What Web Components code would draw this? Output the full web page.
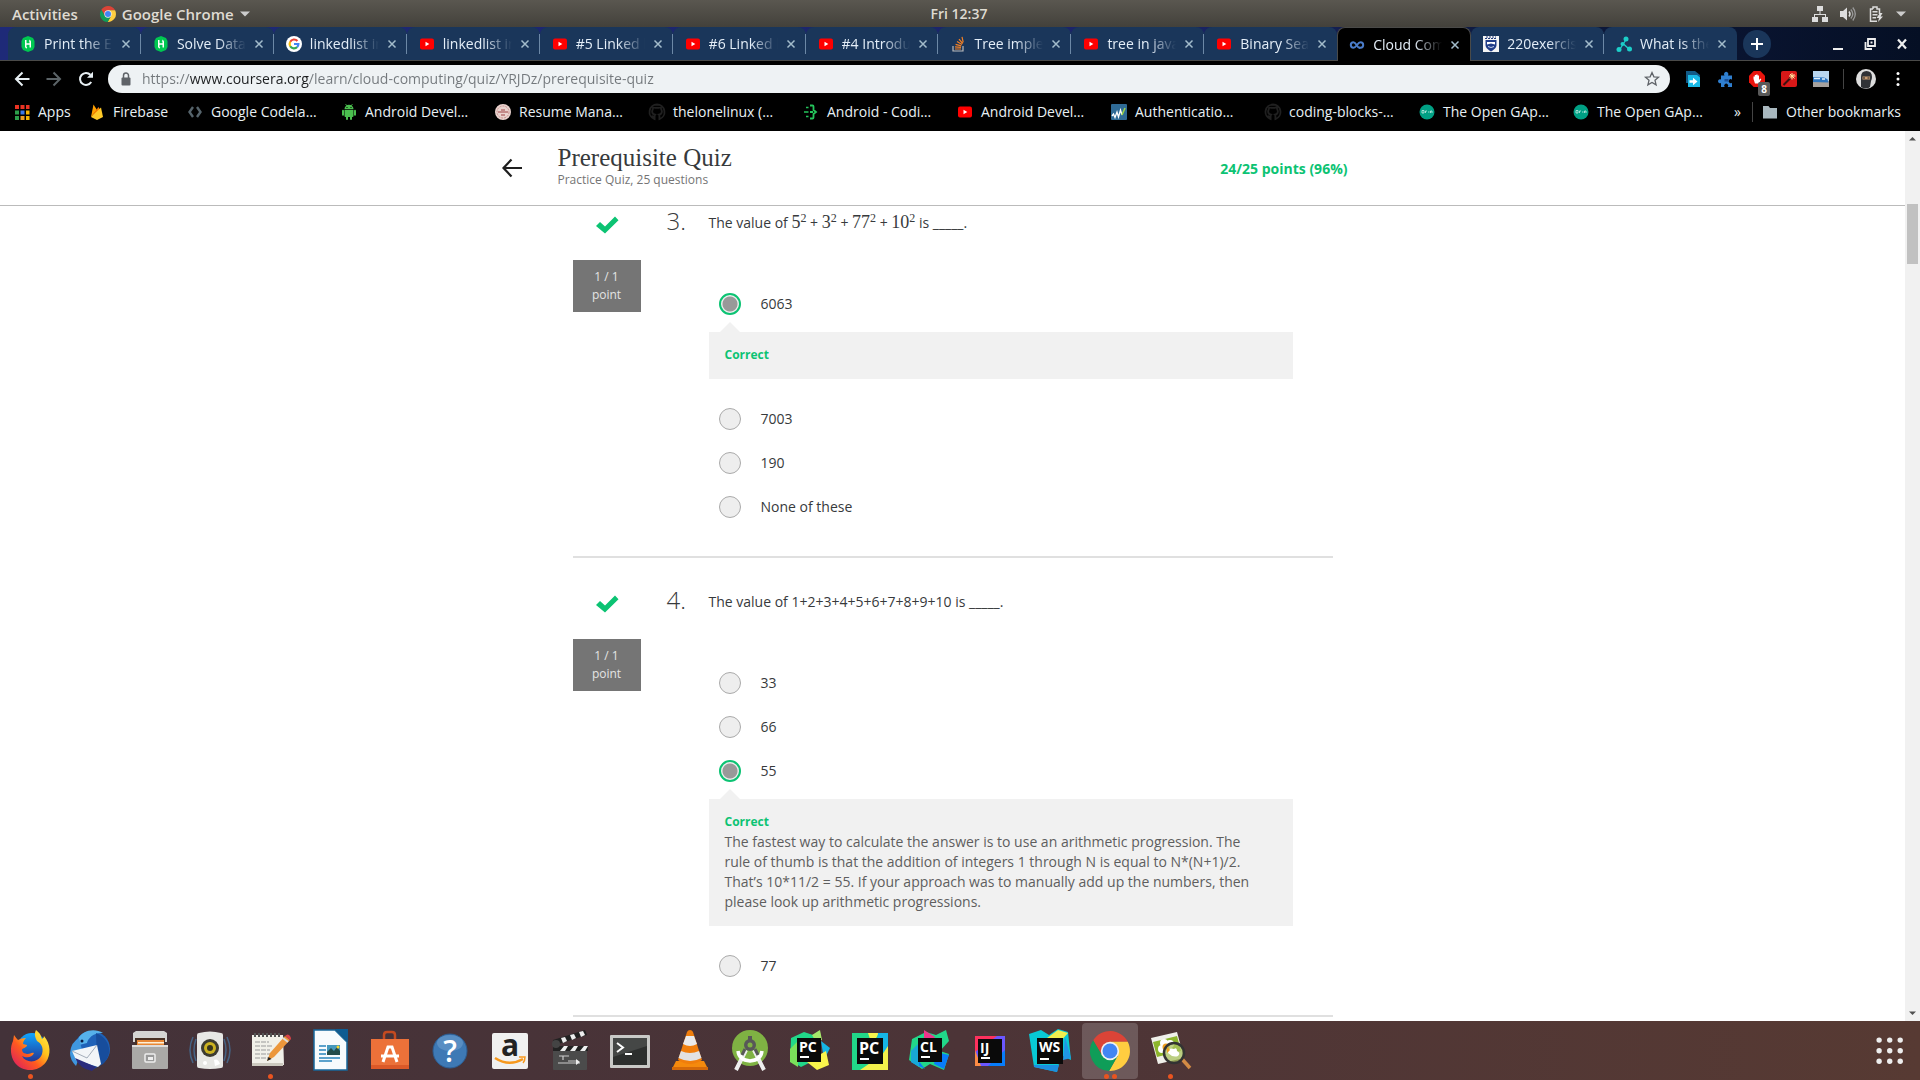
<!DOCTYPE html>
<html lang="en">
<head>
<meta charset="utf-8">
<title>Prerequisite Quiz</title>
<style>
html, body { height: 100%; margin: 0; }
body { display: flex; flex-direction: column; overflow: hidden; background: #fff; font: 14px/20px "Open Sans", "Noto Sans", sans-serif; color: #373a3c; }
</style>
</head>
<body>
<system-bar></system-bar>
<tab-strip>
  <browser-tab icon="hacker">Print the El</browser-tab>
  <browser-tab icon="hacker">Solve Data</browser-tab>
  <browser-tab icon="google">linkedlist in</browser-tab>
  <browser-tab icon="youtube">linkedlist in</browser-tab>
  <browser-tab icon="youtube">#5 Linked l</browser-tab>
  <browser-tab icon="youtube">#6 Linked l</browser-tab>
  <browser-tab icon="youtube">#4 Introdu</browser-tab>
  <browser-tab icon="stack">Tree imple</browser-tab>
  <browser-tab icon="youtube">tree in java</browser-tab>
  <browser-tab icon="youtube" last>Binary Sea</browser-tab>
  <browser-tab icon="coursera" active>Cloud Com</browser-tab>
  <browser-tab icon="crest">220exercis</browser-tab>
  <browser-tab icon="nodes" last>What is the</browser-tab>
</tab-strip>
<address-bar></address-bar>
<bookmark-bar>
  <bookmark-link icon="apps" style="--label:35px">Apps</bookmark-link>
  <bookmark-link icon="firebase" style="--label:58px">Firebase</bookmark-link>
  <bookmark-link icon="codelabs">Google Codela…</bookmark-link>
  <bookmark-link icon="android">Android Devel…</bookmark-link>
  <bookmark-link icon="resume">Resume Mana…</bookmark-link>
  <bookmark-link icon="github">thelonelinux (…</bookmark-link>
  <bookmark-link icon="coding">Android - Codi…</bookmark-link>
  <bookmark-link icon="youtube">Android Devel…</bookmark-link>
  <bookmark-link icon="auth">Authenticatio…</bookmark-link>
  <bookmark-link icon="github">coding-blocks-…</bookmark-link>
  <bookmark-link icon="gapps">The Open GAp…</bookmark-link>
  <bookmark-link icon="gapps">The Open GAp…</bookmark-link>
  <bookmark-link slot="other" icon="folder" style="--label:120px">Other bookmarks</bookmark-link>
</bookmark-bar>
<page-view>
  <quiz-header>
    <span slot="title">Prerequisite Quiz</span>
    <span slot="subtitle">Practice Quiz, 25 questions</span>
    <span slot="score">24/25 points (96%)</span>
  </quiz-header>
  <quiz-question number="3." first>
    <span slot="prompt">The value of <math-power base="5"></math-power> + <math-power base="3"></math-power> + <math-power base="77"></math-power> + <math-power base="10"></math-power> is _____.</span>
    <quiz-option checked>6063</quiz-option>
    <quiz-feedback></quiz-feedback>
    <quiz-option>7003</quiz-option>
    <quiz-option>190</quiz-option>
    <quiz-option>None of these</quiz-option>
  </quiz-question>
  <quiz-question number="4.">
    <span slot="prompt">The value of 1+2+3+4+5+6+7+8+9+10 is _____.</span>
    <quiz-option>33</quiz-option>
    <quiz-option>66</quiz-option>
    <quiz-option checked>55</quiz-option>
    <quiz-feedback>The fastest way to calculate the answer is to use an arithmetic progression. The rule of thumb is that the addition of integers 1 through N is equal to N*(N+1)/2. That’s 10*11/2 = 55. If your approach was to manually add up the numbers, then please look up arithmetic progressions.</quiz-feedback>
    <quiz-option>77</quiz-option>
  </quiz-question>
</page-view>
<app-dock>
  <dock-item icon="firefox" dots="1">Firefox</dock-item>
  <dock-item icon="thunderbird">Thunderbird</dock-item>
  <dock-item icon="files">Files</dock-item>
  <dock-item icon="rhythmbox">Rhythmbox</dock-item>
  <dock-item icon="notes" dots="1">Text Editor</dock-item>
  <dock-item icon="writer">Writer</dock-item>
  <dock-item icon="software">Ubuntu Software</dock-item>
  <dock-item icon="help">Help</dock-item>
  <dock-item icon="amazon">Amazon</dock-item>
  <dock-item icon="clapper">Video Editor</dock-item>
  <dock-item icon="terminal">Terminal</dock-item>
  <dock-item icon="vlc">VLC</dock-item>
  <dock-item icon="studio">Android Studio</dock-item>
  <dock-item icon="pycharm">PyCharm</dock-item>
  <dock-item icon="pycharmce">PyCharm CE</dock-item>
  <dock-item icon="clion">CLion</dock-item>
  <dock-item icon="idea">IntelliJ IDEA</dock-item>
  <dock-item icon="webstorm">WebStorm</dock-item>
  <dock-item icon="chrome" dots="2" active>Chrome</dock-item>
  <dock-item icon="viewer" dots="1">Image Viewer</dock-item>
</app-dock>

<script>
const jb = (shapes, letters, x, y, s, fs) => `${shapes}<rect x="${x}" y="${y}" width="${s}" height="${s}" fill="#0a0a0a"/><rect x="${x + 3}" y="${y + s - 6}" width="9" height="2" fill="#fff"/><text x="${x + 2}" y="${y + fs}" font-family="Open Sans, sans-serif" font-weight="700" font-size="${fs}" fill="#fff">${letters}</text>`;

/* name: [viewBox size, markup] */
const ICONS = {
  chrome: [48, `<path fill="#db4437" d="M3.8 11A24 24 0 0 1 45.3 13H24L14.5 29.5Z"/><path fill="#ffcd40" d="M45.3 13A24 24 0 0 1 22.9 48L33.5 29.5 24 13Z"/><path fill="#0f9d58" d="M22.9 48A24 24 0 0 1 3.8 11L14.5 29.5H33.5Z"/><circle cx="24" cy="24" r="11" fill="#f1f1f1"/><circle cx="24" cy="24" r="9" fill="#4285f4"/>`],
  network: [16, `<g fill="#ddd"><path d="M5 0h6v5H5zM0 11h6v5H0zM10 11h6v5h-6z"/><path d="M7.5 5h1v3H14v3h-1V9H3v2H2V8h5.500z"/></g>`],
  volume: [16, `<path fill="#ddd" d="M0 5h3l4-3.500v13L3 11H0z"/><path d="M9 5.500q2 2.500 0 5" stroke="#ddd" stroke-width="1.500" fill="none"/><path d="M10.800 3.500q4 4.500 0 9M12.800 1.500q5 6.500 0 13" stroke="#999" stroke-width="1.300" fill="none"/>`],
  battery: [16, `<path d="M5 3V1h4v2h2.500v5M9 15.200H2.500V3H5" fill="none" stroke="#ddd" stroke-width="1.500"/><path d="M4.500 5h5v1.500h-5zM4.500 8h5v1.500h-5zM4.500 11H8v1.500H4.500z" fill="#ddd"/><path d="M12 7l-3.500 5H11l-1 4 5-5.500h-2.500L14.500 7z" fill="#ddd"/>`],
  caret: [10, `<path d="M0 2.500h10l-5 5z" fill="#ccc"/>`],
  hacker: [16, `<path fill="#00c851" d="M8 0l5 2 1.500 3v6L13 14l-5 2-5-2-1.500-3V5L3 2z"/><path fill="#fff" d="M5 4h1.500v3.200h3V5.500H8.800l1-2 1.200 2v6H9.500V8.700h-3v2.200h.8l-1 1.800L5 11z"/>`],
  google: [16, `<circle cx="8" cy="8" r="8" fill="#fff"/><g fill="none" stroke-width="2.200"><path stroke="#ea4335" d="M4.200 5.800A4.400 4.400 0 0 1 11.400 5"/><path stroke="#fbbc05" d="M4.200 10.200a4.400 4.400 0 0 1 0-4.400"/><path stroke="#34a853" d="M11.200 11a4.400 4.400 0 0 1-7-.8"/><path stroke="#4285f4" d="M8 8h4.400a4.400 4.400 0 0 1-1.200 3"/></g>`],
  youtube: [16, `<rect x="1" y="2.500" width="14" height="11" rx="2" fill="#f00"/><path fill="#fff" d="M6.500 5.800v4.400L10.300 8z"/>`],
  stack: [16, `<path d="M3 10v5h10v-5" fill="none" stroke="#bbb" stroke-width="1.200"/><path d="M5 13h6M5 10.800l6 .5M5.600 8.300l5.700 1.500M7 5.600l5 3M9 3.200l3.700 4.300M12 .8l1.200 5.500" stroke="#f48024" stroke-width="1.200"/>`],
  coursera: [16, `<path d="M11 10.800C8.500 12 7.500 5.300 4.500 5.300a2.700 2.700 0 0 0 0 5.400C7.500 10.700 8.500 5.300 11.500 5.300a2.700 2.700 0 0 1 0 5.400 2.500 2.500 0 0 1-2-.9" fill="none" stroke="#4a7cc9" stroke-width="2"/>`],
  crest: [16, `<rect width="16" height="16" fill="#f4f4f4"/><path d="M2 2.500h12M3 1h10" stroke="#223b7a" stroke-width="1" stroke-dasharray="2 1"/><path d="M2.500 4h11v5c0 3-3 5-5.500 6.500C5.500 14 2.500 12 2.500 9z" fill="#1f3c88"/><path d="M4 6h8v2.500l-4-1-4 1z" fill="#fff"/><path d="M5 10.500q3 2 6 0" stroke="#c5d0ec" fill="none"/>`],
  nodes: [16, `<path d="M10.500 3L4 13M7.500 8l5.500 5" stroke="#1ccfc9" stroke-width="1.300"/><g fill="#1ccfc9"><circle cx="10" cy="3" r="2.500"/><circle cx="6.500" cy="8" r="2"/><circle cx="3" cy="13.500" r="2.500"/><circle cx="13.500" cy="13" r="2.500"/></g>`],
  close: [10, `<path d="M1.500 1.500l7 7M8.500 1.500l-7 7" stroke="currentColor" stroke-width="1.500"/>`],
  plus: [12, `<path d="M6 0v12M0 6h12" stroke="#fff" stroke-width="2"/>`],
  min: [12, `<path d="M1 10h10v2H1z" fill="#eee"/>`],
  restore: [12, `<path d="M4 1h7v7H4zM1.500 4v7H8" fill="none" stroke="#eee" stroke-width="1.800"/><path d="M6.500 3.500h2v2h-2z" fill="#eee"/>`],
  winclose: [12, `<path d="M2 1.500l8 9M10 1.500l-8 9" stroke="#eee" stroke-width="2.200"/>`],
  back: [16, `<path d="M8.500 1.500L2 8l6.500 6.500M2 8h13.500" fill="none" stroke="currentColor" stroke-width="2"/>`],
  forward: [16, `<path d="M7.500 1.500L14 8l-6.500 6.500M14 8H.5" fill="none" stroke="currentColor" stroke-width="2"/>`],
  reload: [16, `<path d="M13.200 11A6 6 0 1 1 12.400 3.800" fill="none" stroke="#e8f0f4" stroke-width="2"/><path d="M15 .8v6H9z" fill="#e8f0f4"/>`],
  lock: [16, `<rect x="3.500" y="6.500" width="9" height="8" rx="1" fill="#5f6368"/><path d="M5.500 7V4.500a2.500 2.500 0 0 1 5 0V7" fill="none" stroke="#5f6368" stroke-width="1.500"/>`],
  star: [16, `<path d="M8 1.500l1.900 4.300 4.600.4-3.500 3.100 1.100 4.600L8 11.400l-4.100 2.500L5 9.300 1.500 6.200l4.600-.4z" fill="none" stroke="#5f6368" stroke-width="1.300"/>`],
  extpage: [16, `<path d="M1 0h9l5 4v8H1z" fill="#135a86"/><path d="M3 4h9l3 2.500V16H3z" fill="#19b9e6"/><path d="M4.500 9.200H8V6.800l4.500 3.700L8 14.200v-2.400H4.500z" fill="#fff"/>`],
  puzzle: [16, `<path d="M7.500 4.500a2.200 2.200 0 1 1 3.400 0H15v4.200a2 2 0 1 0 0 3V16h-4.300a2 2 0 1 0-3 0H4v-4a2 2 0 1 1 0-3.500v-4z" fill="#2f7fd0"/><path d="M7.500 8h4v2.500h-4z" fill="#1b4f97"/>`],
  hand: [16, `<path d="M4.700 0h6.600L16 4.700v6.600L11.300 16H4.700L0 11.300V4.700z" fill="#e8140c"/><path d="M4.500 8V5.500h1.300V8V4h1.400v4V3.500h1.400V8V4.500H10V9l1.300-1.500 1 .8L10 12.500H6z" fill="#fff"/>`],
  wand: [16, `<rect width="16" height="16" rx="2" fill="#d81818"/><path d="M2.500 14L9.500 7" stroke="#3a1010" stroke-width="2"/><path d="M11 2v6.500M8 5h6.500M9 3l4.500 4.500M13.500 3L9 7.500" stroke="#ffe9a0" stroke-width="1"/>`],
  train: [16, `<rect width="16" height="16" fill="#b9d6ee"/><path d="M0 10h16v6H0z" fill="#a6a19d"/><path d="M0 6l11 .5q4 1 4.500 5L0 11z" fill="#2e76bf"/><path d="M1 7.500h6M9 8h3" stroke="#e5f2fc" stroke-width="1.500"/>`],
  avatar: [20, `<circle cx="10" cy="10" r="10" fill="#ddd"/><path d="M5 18V8q0-6 5.500-6T16 8q0 2-1 4l-1 6q-4 3-9 0z" fill="#303236"/><path d="M6.500 7.500H14v3H6.500z" fill="#c89c72"/><path d="M7 9h2M11.500 9h2" stroke="#222" stroke-width="1.200"/>`],
  dots: [16, `<g fill="#fff"><circle cx="8" cy="2.500" r="1.500"/><circle cx="8" cy="8" r="1.500"/><circle cx="8" cy="13.500" r="1.500"/></g>`],
  apps: [16, `<path d="M1 1h4v4H1zM6.500 1h4v4h-4zM12 1h3.500v4H12z" fill="#ea3323"/><path d="M1 6.500h4v4H1z" fill="#2c9f4b"/><path d="M6.500 6.500h4v4h-4z" fill="#3b78e7"/><path d="M12 6.500h3.500v4H12z" fill="#f5b400"/><path d="M1 12h4v4H1z" fill="#2c9f4b"/><path d="M6.500 12h4v4h-4z" fill="#ea9c23"/><path d="M12 12h3.500v4H12z" fill="#f5b400"/>`],
  firebase: [16, `<path d="M2 13L4.500.5 8 6z" fill="#ffa000"/><path d="M2 13L9.500 3l2 3.500z" fill="#f57c00"/><path d="M2 13L12 3.500 14 13l-6 3z" fill="#ffca28"/>`],
  codelabs: [16, `<path d="M6 3L2.500 8 6 13M10 3l3.500 5-3.500 5" fill="none" stroke="#56646c" stroke-width="2.400"/>`],
  android: [16, `<g fill="#4bbf4f"><path d="M3.500 5a4.500 4.300 0 0 1 9 0zM3.500 5.700h9V12q0 1-1 1h-7q-1 0-1-1z"/><rect x="1" y="5.700" width="2" height="6" rx="1"/><rect x="13" y="5.700" width="2" height="6" rx="1"/><rect x="5" y="11" width="2" height="5" rx="1"/><rect x="9" y="11" width="2" height="5" rx="1"/></g><path d="M4.500 0L6 2M11.500 0L10 2" stroke="#4bbf4f" stroke-width=".8"/><path d="M5.500 3h1v1h-1zM9.500 3h1v1h-1z" fill="#000"/>`],
  resume: [16, `<circle cx="8" cy="8" r="8" fill="#ead3cf"/><circle cx="8" cy="8" r="6" fill="none" stroke="#c58f8b" stroke-width="1" stroke-dasharray="2 1"/><path d="M3 8h10M6 6h4M6 11h4" stroke="#9c4344"/>`],
  github: [16, `<path d="M8 .5a7.500 7.500 0 0 0-2.400 14.600v-2.300C3.500 13.200 3 11.500 3 11.500M8 .5a7.500 7.500 0 0 1 2.400 14.600v-3c0-.8-.3-1.200-.5-1.400 2.200-.3 3-1.500 3-3.500L12 4.500l-.2-1.500-2 .9H6.200L4.200 3 4 4.500 3.100 7.200c0 2 .8 3.200 3 3.500-.4.500-.5 1-.5 2" fill="none" stroke="#202020" stroke-width="1.800"/>`],
  coding: [16, `<path d="M3 3.500h2.500M1 8h4.500M3 12.500h2.500" stroke="#24c45b" stroke-width="1.500"/><path d="M7 1.500h2.500q1 0 1 1V6L13 8l-2.500 2v3.500q0 1-1 1H7M7 8h3" fill="none" stroke="#24c45b" stroke-width="1.800"/>`],
  auth: [16, `<rect width="16" height="16" rx="1" fill="#2f6b96"/><path d="M1 12l1.500-2L4 13.500 6 8l1.500 5L9.500 6 11 11" fill="none" stroke="#fff" stroke-width="1.300"/><path d="M11 11l3-7" stroke="#9ad24a" stroke-width="1.600"/>`],
  gapps: [16, `<circle cx="8" cy="8" r="7.500" fill="#00a084"/><path d="M3 6.500h2v2.500H3zM6.500 9V7H8M9 8h1.500M11.500 9V7H13v2" stroke="#c4eee5" stroke-width=".8" fill="none"/>`],
  folder: [16, `<path d="M1 2h5.500L8 4h7v10.500H1z" fill="#a9b8bf"/>`],
  bigback: [20, `<path d="M9.500 1.500L1.500 10l8 8.500M1.500 10H20" fill="none" stroke="#1f1f1f" stroke-width="2.200"/>`],
  check: [24, `<path d="M1 13l4-4 5 4.500L20 3.500l3.500 3.700L10 20.500z" fill="#0cc373"/>`],
  up: [7, `<path d="M0 5.500h7L3.500 2z" fill="#505050"/>`],
  down: [7, `<path d="M0 1.500h7L3.500 5z" fill="#505050"/>`],
  grid: [26, `<g fill="#eee"><circle cx="3" cy="3" r="2.600"/><circle cx="13.200" cy="3" r="2.600"/><circle cx="23.300" cy="3" r="2.600"/><circle cx="3" cy="13.200" r="2.600"/><circle cx="13.200" cy="13.200" r="2.600"/><circle cx="23.300" cy="13.200" r="2.600"/><circle cx="3" cy="23.300" r="2.600"/><circle cx="13.200" cy="23.300" r="2.600"/><circle cx="23.300" cy="23.300" r="2.600"/></g>`],

  firefox: [44, `<defs><linearGradient id="a" x1="1" y1="0" x2="0" y2="1"><stop offset="0" stop-color="#fff44f"/><stop offset=".35" stop-color="#ffc21c"/><stop offset=".6" stop-color="#ff5a1f"/><stop offset="1" stop-color="#d6126e"/></linearGradient><linearGradient id="b" x1="0" y1="0" x2="0" y2="1"><stop offset="0" stop-color="#0ea6ff"/><stop offset="1" stop-color="#26308f"/></linearGradient></defs><circle cx="24" cy="19" r="15" fill="url(#b)"/><path d="M28 1c5 4 5 6 6 9q2-1 2-3c7 8 7 19 2 26-8 11-24 10-31 1C2 27 2 18 5 12l1-6q2 3 4 5 3-2 8-2c-2 2-3 4-3 6l4 1c0 3-5 3-5 5 1 4 3 3 5 4 4 0 4-2 7-1-2 5-8 5-12 3 4 8 17 7 20-2 2-6-1-11-5-13-2-4-3-7-1-11z" fill="url(#a)"/>`],
  thunderbird: [44, `<circle cx="24" cy="20" r="18" fill="#1f62b8"/><path d="M10 10C14 1 27-1 35 4 26 3 20 9 19 14l-8 2z" fill="#56b1ea"/><path d="M2 24Q3 13 11 9l3 12-6 16Q2 31 2 24z" fill="#3f97df"/><path d="M28 4c15 6 17 22 7 31l-11 6 5-8z" fill="#174d9c"/><path d="M4 22l25-6 4 19-3 3L8 31z" fill="#f2f5f8"/><path d="M4 22l15 7 10-13" fill="none" stroke="#a3adba"/><path d="M7 29l21 9-4 4Q12 40 7 29z" fill="#2a2b7d"/><circle cx="14" cy="12" r="1.500" fill="#091b44"/>`],
  files: [44, `<path d="M5 4l3-2h28l3 2v9H5z" fill="#d5d5d3"/><path d="M7 9h30v9H7z" fill="#493124"/><path d="M9 11h27v5H9z" fill="#e88735"/><path d="M10 13h26v1.500H10z" fill="#fff0d8"/><path d="M4 16h36v23q0 1-1 1H5q-1 0-1-1z" fill="#aaa9a7"/><path d="M4 16h36v2H4z" fill="#dedddc"/><rect x="17" y="25" width="10" height="8" rx="1" fill="#999" stroke="#eee" stroke-width="1.500"/><path d="M20 28h5v3h-5z" fill="#eee"/>`],
  rhythmbox: [44, `<path d="M5 8q-6 13 0 26M39 8q6 13 0 26M8 10q-4 11 0 22M36 10q4 11 0 22" fill="none" stroke="#466384" stroke-width="1.500"/><path d="M11 4q11-3 22 0 2 0 2 2v31q0 2-2 2-11 2-22 0-2 0-2-2V6q0-2 2-2z" fill="#e7e7e4"/><circle cx="22" cy="19" r="9" fill="#3c3b31"/><circle cx="22" cy="19" r="6" fill="#cbb221"/><circle cx="22" cy="19" r="3" fill="#38351e"/><circle cx="17" cy="34" r="2" fill="#fff"/><path d="M26 31q4-2 6 4l-5 2z" fill="#fff"/>`],
  notes: [44, `<path d="M4 6h31l1 30H4z" fill="#f1f0e9"/><path d="M4 34h31v3H4z" fill="#ccc9bf"/><path d="M7 8V4M11 8V4M15 8V4M19 8V4M23 8V4M27 8V4M31 8V4" stroke="#555" stroke-width="2"/><path d="M7 13h14M7 17h18M7 21h15M7 25h16M7 29h13" stroke="#999" stroke-width="1" stroke-dasharray="5 1"/><path d="M37 7l5 4-16 17-7 4 3-8z" fill="#ec973b"/><path d="M35 9l5 4" stroke="#ddd" stroke-width="2"/><path d="M37 7q3-3 5 0t0 4z" fill="#d94247"/><path d="M19 32l1.500-4 3 2z" fill="#222"/>`],
  writer: [44, `<path d="M6 1h21l12 12v28H6z" fill="#f7fbfd" stroke="#17689c" stroke-width="1.500"/><path d="M27 0h13v13z" fill="#0e5c92"/><path d="M11 17h7M11 21h7M11 25h7M11 29h21M11 32h13" stroke="#2a85bc" stroke-width="1.500"/><path d="M19 16h13v10H19z" fill="#4599bd"/><path d="M19 26v-3l4-4 3 3 3-4 3 4v4z" fill="#244d4b"/><circle cx="30" cy="18" r="1.500" fill="#f6d72d"/>`],
  software: [44, `<path d="M16 11V6q0-3 3-3h5q3 0 3 3v5" fill="none" stroke="#c44a20" stroke-width="2.500"/><path d="M3 10h38v30H3z" fill="#ec7139"/><path d="M3 36h38v4H3z" fill="#dc5928"/><path d="M15 33l5-15h4l5 15M13 27h18" fill="none" stroke="#fff" stroke-width="3"/>`],
  help: [44, `<circle cx="22" cy="22" r="17" fill="#3e79b5" stroke="#2c5d91"/><ellipse cx="22" cy="14" rx="13" ry="8" fill="#6b9dcd" opacity=".6"/><text x="22" y="33" text-anchor="middle" font-family="Open Sans, sans-serif" font-weight="600" font-size="30" fill="#fff">?</text>`],
  amazon: [44, `<rect x="4" y="4" width="36" height="36" rx="2" fill="#f0f0f0"/><text x="22" y="27" text-anchor="middle" font-family="Open Sans, sans-serif" font-weight="700" font-size="30" fill="#222">a</text><path d="M7 29q14 9 28 1" fill="none" stroke="#f7981d" stroke-width="2.500"/><path d="M31 28h6q0 4-2 6" fill="none" stroke="#f7981d" stroke-width="1.500"/>`],
  clapper: [44, `<path d="M5 20h34v20q0 1-1 1H6q-1 0-1-1z" fill="#4b4b4b"/><path d="M5 17h35v5H5z" fill="#222"/><path d="M12 22l4-5h4l-3 5zM22 22l4-5h4l-3 5zM32 22l4-5h4l-3 5z" fill="#eee"/><path d="M5 11L37 1l2 5L7 16z" fill="#222"/><path d="M13 9l4-1 2 4-4 2zM22 6l4-1 2 4-4 2zM31 3l4-1 2 4-4 2z" fill="#eee"/><circle cx="8" cy="15" r="4" fill="#444"/><path d="M11 27h10M15 27v4M10 34h22M20 32h10" stroke="#ccc" stroke-width="1.200"/><path d="M28 30l4 3-4 3z" fill="#eee"/>`],
  terminal: [44, `<rect x="2" y="6" width="40" height="33" rx="1" fill="#c9c9c7"/><rect x="5" y="9" width="34" height="27" fill="#2d2f2e"/><path d="M5 9h34v8L5 28z" fill="#454746"/><path d="M9 14l6 4.500L9 23M17 25h7" fill="none" stroke="#fff" stroke-width="2"/>`],
  vlc: [44, `<path d="M8 32h28l4 8H4z" fill="#f58a0d"/><path d="M4 38h36v3H4z" fill="#d4690a"/><path d="M22 1q2 0 3 2l9 28q-12 8-24 0l9-28q1-2 3-2z" fill="#f07e0c"/><path d="M18 7h8l3 8q-7 4-14 0z" fill="#eaeaea"/><path d="M13 22q9 4 18 0l2.500 7q-11 6-23 0z" fill="#e2e2e2"/>`],
  studio: [44, `<circle cx="22" cy="19" r="18" fill="#7fb243"/><path d="M18 21L8 41M26 21l10 20" stroke="#eee" stroke-width="4"/><path d="M10 22q1 9 12 10 11-1 12-10" fill="none" stroke="#fff" stroke-width="3.500"/><circle cx="22" cy="16" r="6" fill="#585858"/><path d="M20 7h4v7h-4z" fill="#585858"/><circle cx="22" cy="16" r="2.500" fill="#7fb243"/><path d="M17 20l-3 6M27 20l3 6" stroke="#585858" stroke-width="3"/>`],
  pycharm: [44, jb(`<path d="M3 9L16 3l9 3 6-4 2 10-4 18-16 8-11-7z" fill="#21d789"/><path d="M24 6l8-5 2 10-6 2z" fill="#a6e86b"/><path d="M33 12l9 7-6 12z" fill="#15b5e6"/><path d="M38 22l3 14-12 5-10-8z" fill="#f9f44c"/><path d="M2 20l8-8v26l-8-5z" fill="#7ae05a"/>`, 'PC', 9, 9, 24, 14)],
  pycharmce: [44, jb(`<path d="M4 4h36v37H4z" fill="#21d789"/><path d="M20 4h11l-7 12z" fill="#f9f44c"/><path d="M30 4h10v18l-12 3z" fill="#15b5e6"/><path d="M40 17v24H12L34 26z" fill="#f3f04b"/>`, 'PC', 9, 9, 26, 16)],
  clion: [44, jb(`<path d="M4 10L18 3l10 3 10-5 3 11-9 10 9 3-5 16-14-6-8 5-13-9z" fill="#21d789"/><path d="M16 9V1l11 7-6 8z" fill="#ed358c"/><path d="M3 22l14 18-14-7zM28 23l13 3-5 14-10-5z" fill="#087cfa"/><path d="M3 22l8-8v24l-8-5z" fill="#18a8d6"/>`, 'CL', 10, 9, 24, 14)],
  idea: [44, jb(`<path d="M7 7h30v30H7z" fill="#6b57ff"/><path d="M7 7h22L7 23z" fill="#fe315d"/><path d="M7 21l6 16H7z" fill="#fc8b45"/><path d="M20 37h17V21z" fill="#087cfa"/>`, 'IJ', 10, 10, 24, 14)],
  webstorm: [44, jb(`<path d="M1 5L13 1l8 5 9-6 10 3 3 28-10-5-4 17-23-5z" fill="#08c9d5"/><path d="M19 9l11-8 10 3-8 9z" fill="#f1ee4e"/><path d="M37 8l6 21-8 2z" fill="#2096e6"/><path d="M6 36h25l-2 7-23-5z" fill="#1c8ee0"/>`, 'WS', 9, 9, 26, 14)],
  viewer: [44, `<path d="M3 9L29 3l7 26-26 6z" fill="#f0f0ea"/><path d="M5 13l24-6 4 15-24 6z" fill="#8db52c"/><g fill="#fff"><circle cx="16" cy="14" r="4"/><circle cx="22" cy="15" r="4"/><circle cx="14" cy="20" r="4"/><circle cx="20" cy="22" r="4"/></g><circle cx="18" cy="18" r="3.500" fill="#ef9e1f"/><path d="M34 30l8 9" stroke="#d38b45" stroke-width="3.500"/><circle cx="26" cy="24" r="10" fill="#a9c35f" fill-opacity=".75"/><circle cx="26" cy="24" r="10" fill="none" stroke="#333" stroke-width="2.500"/><path d="M20 24q1-6 6-4 3-2 3 2 4 2 1 5-5 2-10-3z" fill="#fff"/><path d="M19 18l3 3-3 3z" fill="#ef9e1f"/>`]
};

function define(name, css, html, setup) {
  const template = document.createElement('template');
  template.innerHTML = `<style>:host,*{box-sizing:border-box}${css}</style>${html}`;
  customElements.define(name, class extends HTMLElement {
    connectedCallback() {
      if (this.shadowRoot) return;
      const root = this.attachShadow({ mode: 'open' });
      root.append(template.content.cloneNode(true));
      if (setup) setup(this, root);
    }
  });
}

const plain = 'button{display:flex;align-items:center;justify-content:center;border:0;padding:0;margin:0;background:none;color:inherit;font:inherit}';

customElements.define('ui-icon', class extends HTMLElement {
  static observedAttributes = ['name'];
  constructor() {
    super();
    this.attachShadow({ mode: 'open' });
  }
  attributeChangedCallback(attribute, before, name) {
    const [size, body] = ICONS[name];
    this.shadowRoot.innerHTML = `<style>:host{display:block;flex:none;width:var(--size,16px);height:var(--size,16px)}svg{display:block;width:100%;height:100%;overflow:visible}</style><svg viewBox="0 0 ${size} ${size}" aria-hidden="true">${body}</svg>`;
  }
});

define('system-bar', `${plain}
  :host{display:grid;grid-template-columns:1fr auto 1fr;align-items:center;flex:none;height:27px;padding:0 14px 0 12px;background:linear-gradient(#5a5750,#43413b);color:#dfdbd2;font:600 14px/20px "Open Sans",sans-serif}
  .left,.right{display:flex;align-items:center}.left{gap:22px;font-size:15px}.right{justify-content:flex-end;gap:12px}
  .app{gap:6px}`,
  `<div class="left"><button>Activities</button><button class="app"><ui-icon name="chrome"></ui-icon>Google Chrome<ui-icon name="caret" style="--size:10px"></ui-icon></button></div>
   <time>Fri 12:37</time>
   <div class="right"><ui-icon name="network"></ui-icon><ui-icon name="volume"></ui-icon><ui-icon name="battery"></ui-icon><ui-icon name="caret" style="--size:10px"></ui-icon></div>`);

define('tab-strip', `${plain}
  :host{display:flex;flex:none;height:34px;padding-left:8px;background:linear-gradient(90deg,#1e2a78,#1b2468 60%,#101c44 75%,#050f24);border-bottom:1px solid #4a4a48}
  .tabs{display:flex;flex:0 1 1729px;min-width:0}
  .add{width:28px;height:28px;border-radius:50%;background:#1a365a;align-self:center;margin-left:6px}
  .win{display:flex;align-items:center;gap:20px;margin-left:auto;padding-right:12px}`,
  `<div class="tabs"><slot></slot></div><button class="add" aria-label="New tab"><ui-icon name="plus" style="--size:12px"></ui-icon></button>
   <div class="win"><button aria-label="Minimize"><ui-icon name="min" style="--size:12px"></ui-icon></button><button aria-label="Restore"><ui-icon name="restore" style="--size:12px"></ui-icon></button><button aria-label="Close"><ui-icon name="winclose" style="--size:12px"></ui-icon></button></div>`);

define('browser-tab', `${plain}
  :host{display:flex;align-items:center;flex:1 1 0;min-width:0;height:33px;padding:0 10px 0 12px;background:#1a365a;border-radius:8px 8px 0 0;color:#e4eef8;position:relative}
  :host([active]){background:#000;height:34px;border:1px solid #4a4a48;border-bottom:0;padding:0 10px 0 11px}
  :host(:not([active]):not([last]))::after{content:"";position:absolute;right:0;top:7px;width:1px;height:20px;background:#6c88a6}
  span{flex:1;min-width:0;overflow:hidden;white-space:nowrap;margin:0 8px;-webkit-mask-image:linear-gradient(90deg,#000 60%,transparent);mask-image:linear-gradient(90deg,#000 60%,transparent)}
  button{color:#a3bccb}`,
  `<ui-icon></ui-icon><span><slot></slot></span><button aria-label="Close tab"><ui-icon name="close" style="--size:10px"></ui-icon></button>`,
  (host, root) => root.querySelector('ui-icon').setAttribute('name', host.getAttribute('icon')));

define('address-bar', `${plain}
  :host{display:flex;align-items:center;flex:none;height:36px;padding:0 14px;background:#000;color:#e8f0f4}
  .nav{display:flex;gap:16px;padding-right:14px}.off{color:#5c6468}
  form{display:flex;align-items:center;gap:8px;flex:1;height:28px;border-radius:14px;background:#eef2f4;padding:0 10px;margin:0}
  input{flex:1;min-width:0;border:0;outline:0;padding:0 0 2px;height:24px;font:14px/20px "Open Sans",sans-serif;color:#73787c;-webkit-text-fill-color:transparent;background:linear-gradient(90deg,#73787c 48px,#1c1e20 48px 167px,#73787c 167px);-webkit-background-clip:text;background-clip:text}
  .ext{display:flex;align-items:center;gap:16px;padding-left:15px}
  .avatar{--size:20px;margin:0 -2px}
  .badged{position:relative}.badged b{position:absolute;left:9px;top:11px;width:12px;height:14px;border-radius:2px;background:#5a5a5a;color:#fff;font:700 10px/14px "Open Sans",sans-serif;text-align:center}
  i{width:1px;height:20px;background:#444;margin:0 -2px}`,
  `<div class="nav"><button aria-label="Back"><ui-icon name="back"></ui-icon></button><button class="off" aria-label="Forward"><ui-icon name="forward"></ui-icon></button><button aria-label="Reload"><ui-icon name="reload"></ui-icon></button></div>
   <form><ui-icon name="lock"></ui-icon><input aria-label="Address" value="https://www.coursera.org/learn/cloud-computing/quiz/YRJDz/prerequisite-quiz"><ui-icon name="star"></ui-icon></form>
   <div class="ext"><ui-icon name="extpage"></ui-icon><ui-icon name="puzzle"></ui-icon><div class="badged"><ui-icon name="hand"></ui-icon><b>8</b></div><ui-icon name="wand"></ui-icon><ui-icon name="train"></ui-icon><i></i><ui-icon name="avatar" class="avatar"></ui-icon><button aria-label="Menu"><ui-icon name="dots"></ui-icon></button></div>`);

define('bookmark-bar', `${plain}
  :host{display:flex;align-items:center;flex:none;height:34px;padding:0 14px 4px;gap:16px;background:#000;color:#e8f0f4}
  .end{display:flex;align-items:center;gap:9px;margin-left:auto}
  i{width:1px;height:20px;background:#444;margin-left:2px}`,
  `<slot></slot><div class="end"><button aria-label="More bookmarks">»</button><i></i><slot name="other"></slot></div>`);

define('bookmark-link', `
  :host{display:block;min-width:0}
  a{display:flex;align-items:center;gap:8px;color:inherit;text-decoration:none;white-space:nowrap}
  span{width:var(--label,114px)}`,
  `<a href="#"><ui-icon></ui-icon><span><slot></slot></span></a>`,
  (host, root) => root.querySelector('ui-icon').setAttribute('name', host.getAttribute('icon')));

define('page-view', `${plain}
  :host{display:flex;flex:1;min-height:0;background:#fff}
  main{flex:1;min-width:0;overflow:hidden}
  .rail{display:flex;flex-direction:column;align-items:center;flex:none;width:15px;background:#f1f1f1}
  .rail button{width:15px;height:15px}
  .track{flex:1;width:11px;padding-top:58px}.thumb{height:60px;background:#c1c1c1}`,
  `<main><slot></slot></main><div class="rail"><button aria-label="Scroll up"><ui-icon name="up" style="--size:7px"></ui-icon></button><div class="track"><div class="thumb"></div></div><button aria-label="Scroll down"><ui-icon name="down" style="--size:7px"></ui-icon></button></div>`);

define('quiz-header', `${plain}
  :host{display:block;border-bottom:1px solid #bbb}
  header{display:flex;align-items:center;max-width:902px;height:74px;margin:0 auto;padding-right:56px;gap:36px}
  h1{margin:0;font:400 25px/26px "Liberation Serif",serif;color:#373a3c}
  p{margin:0;font-size:12px;line-height:18px;color:#757575}
  .titles{padding-bottom:3px}
  strong{margin-left:auto;padding-top:2px;font-weight:700;color:#0cc373}`,
  `<header><button aria-label="Back"><ui-icon name="bigback" style="--size:20px"></ui-icon></button><div class="titles"><h1><slot name="title"></slot></h1><p><slot name="subtitle"></slot></p></div><strong><slot name="score"></slot></strong></header>`);

define('quiz-question', `
  :host{display:grid;grid-template-columns:68px 41px 1fr;column-gap:26px;max-width:760px;margin:0 auto;padding:34px 0 27px;border-bottom:2px solid #e0e0e0}
  :host([first]){padding-top:7px}
  .mark{display:flex;flex-direction:column;align-items:center;gap:23px}
  .points{width:68px;height:52px;padding:8px 0;background:#757575;color:#e4e4e4;font-size:12px;line-height:18px;text-align:center}
  .num{font-size:24px;line-height:16px;font-weight:300}
  .body{margin-left:-25px;padding-right:40px}
  .prompt{height:20px;margin-bottom:49px;line-height:20px}`,
  `<div class="mark"><ui-icon name="check" style="--size:24px"></ui-icon><div class="points">1 / 1<br>point</div></div><div class="num"></div><div class="body"><div class="prompt"><slot name="prompt"></slot></div><slot></slot></div>`,
  (host, root) => { root.querySelector('.num').textContent = host.getAttribute('number'); });

define('math-power', `
  :host{display:inline;font:18px/0 "Liberation Serif",serif}
  sup{font-size:12px;line-height:0;vertical-align:6px}`,
  `<span></span><sup>2</sup>`,
  (host, root) => { root.querySelector('span').textContent = host.getAttribute('base'); });

define('quiz-option', `
  :host{display:block}
  label{display:flex;align-items:center;gap:20px;height:44px;padding-left:10px}
  input{appearance:none;flex:none;width:22px;height:22px;margin:0;border:1px solid #aaa;border-radius:50%;background:#eee}
  input:checked{border:2px solid #0cc373;background:radial-gradient(circle,#999 7px,#eee 8px)}`,
  `<label><input type="radio"><span><slot></slot></span></label>`,
  (host, root) => { root.querySelector('input').checked = host.hasAttribute('checked'); });

define('quiz-feedback', `
  :host{display:block;position:relative;margin:6px 0 18px;padding:12px 32px 14px 16px;background:#f1f1f1;color:#5e5e5e}
  :host::before{content:"";position:absolute;left:11px;top:-10px;border:10px solid transparent;border-top:0;border-bottom-color:#f1f1f1}
  strong{display:block;font-size:12px;line-height:21px;color:#0cc373}
  div{line-height:20px}`,
  `<strong>Correct</strong><div><slot></slot></div>`);

define('app-dock', `${plain}
  :host{display:flex;flex:none;height:59px;background:linear-gradient(90deg,#433239,#4c3437 50%,#573a33)}
  .all{margin-left:auto;padding-right:17px}`,
  `<slot></slot><button class="all" aria-label="Show applications"><ui-icon name="grid" style="--size:27px"></ui-icon></button>`);

define('dock-item', `${plain}
  :host{display:flex;flex:0 1 60px;justify-content:center;align-items:center}
  button{position:relative;width:56px;height:56px;border-radius:4px}
  :host([active]) button{background:rgba(255,255,255,.18)}
  .dots{position:absolute;left:0;right:0;bottom:0;display:flex;justify-content:center;gap:3px}
  .dots i{width:5px;height:5px;border-radius:50%;background:#e95420}`,
  `<button><ui-icon></ui-icon><span class="dots"></span></button>`,
  (host, root) => {
    const icon = root.querySelector('ui-icon');
    const name = host.getAttribute('icon');
    icon.setAttribute('name', name);
    icon.style.setProperty('--size', name === 'chrome' ? '40px' : '44px');
    root.querySelector('button').setAttribute('aria-label', host.textContent);
    root.querySelector('.dots').innerHTML = '<i></i>'.repeat(Number(host.getAttribute('dots')) || 0);
  });
</script>
</body>
</html>
